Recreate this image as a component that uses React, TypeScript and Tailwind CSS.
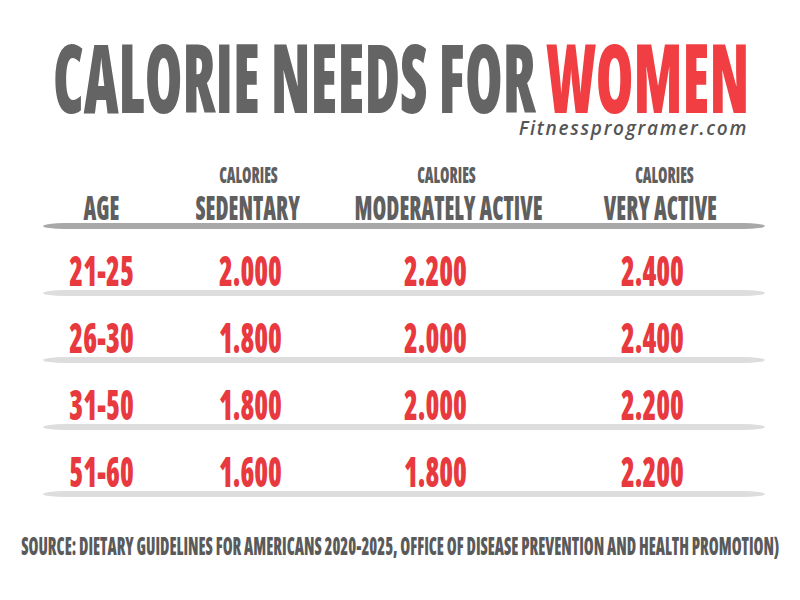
const F = "font-['Open_Sans',sans-serif] font-extrabold [font-stretch:75%]";

function Line({ dark }: { dark?: boolean }) {
  return (
    <div
      className={
        "ml-[43px] w-[722px] h-[6px] rounded-[22px/3px] " +
        (dark ? "bg-[#a8a8a8]" : "bg-[#dddddd]")
      }
    />
  );
}

const cols = ["w-[116px]", "w-[178px]", "w-[210px]", "w-[218px]"];

function HeadCell({ i, top, label, topPad, labelPad }: { i: number; top?: string; label: string; topPad: string; labelPad: string }) {
  return (
    <div className={cols[i] + " flex flex-col items-center"}>
      <div className={"h-[22px] flex justify-center w-full " + topPad}>
        {top && (
          <span className="inline-block whitespace-nowrap text-[22px] leading-[22px] text-[#5f5f5f] scale-x-[0.69]">{top}</span>
        )}
      </div>
      <div className={"mt-[5px] h-[34px] flex justify-center w-full " + labelPad}>
        <span className="inline-block whitespace-nowrap text-[34px] leading-[34px] text-[#5f5f5f] scale-x-[0.655]">{label}</span>
      </div>
    </div>
  );
}

const rows = [
  ["21-25", "2.000", "2.200", "2.400"],
  ["26-30", "1.800", "2.000", "2.400"],
  ["31-50", "1.800", "2.000", "2.200"],
  ["51-60", "1.600", "1.800", "2.200"],
];

const valPads = ["pl-[2px]", "pl-[4px]", "pr-[14px]", "pr-[8px]"];

function Row({ r }: { r: string[] }) {
  return (
    <div className="flex ml-[43px] h-[43px]">
      {r.map((v, i) => (
        <div key={i} className={cols[i] + " flex justify-center " + valPads[i]}>
          <span className="inline-block whitespace-nowrap text-[43px] leading-[43px] text-[#e8393f] scale-x-[0.65]">{v}</span>
        </div>
      ))}
    </div>
  );
}

export default function App() {
  return (
    <div className={"relative w-[800px] h-[600px] bg-white overflow-hidden " + F}>
      <div className="mt-[29px] h-[95px] flex justify-center pl-[3px]">
        <span className="inline-block whitespace-nowrap text-[95px] leading-[95px] text-[#646464] scale-x-[0.64]">
          CALORIE NEEDS FOR <span className="text-[#f03e42]">WOMEN</span>
        </span>
      </div>
      <div className="mt-[-5px] h-[19px] flex justify-end pr-[52px]">
        <span className="font-['Open_Sans',sans-serif] italic font-semibold [font-stretch:100%] text-[19px] leading-[19px] tracking-[1.7px] text-[#555555]">
          Fitnessprogramer.com
        </span>
      </div>
      <div className="mt-[25px] flex ml-[43px]">
        <HeadCell i={0} label="AGE" topPad="" labelPad="" />
        <HeadCell i={1} top="CALORIES" label="SEDENTARY" topPad="" labelPad="" />
        <HeadCell i={2} top="CALORIES" label="MODERATELY ACTIVE" topPad="pl-[8px]" labelPad="pl-[14px]" />
        <HeadCell i={3} top="CALORIES" label="VERY ACTIVE" topPad="pl-[16px]" labelPad="pl-[8px]" />
      </div>
      <div className="mt-[-1px]">
        <Line dark />
      </div>
      <div className="h-[19px]" />
      {rows.map((r, k) => (
        <div key={k} className="flex flex-col">
          <Row r={r} />
          <div className="mt-[-1px]">
            <Line />
          </div>
          <div className="h-[19px]" />
        </div>
      ))}
      <div className="absolute left-0 right-0 top-[533px] flex justify-center">
        <span className="inline-block whitespace-nowrap text-[25px] leading-[25px] text-[#5a5a5a] scale-x-[0.64]">
          SOURCE: DIETARY GUIDELINES FOR AMERICANS 2020-2025, OFFICE OF DISEASE PREVENTION AND HEALTH PROMOTION)
        </span>
      </div>
    </div>
  );
}
